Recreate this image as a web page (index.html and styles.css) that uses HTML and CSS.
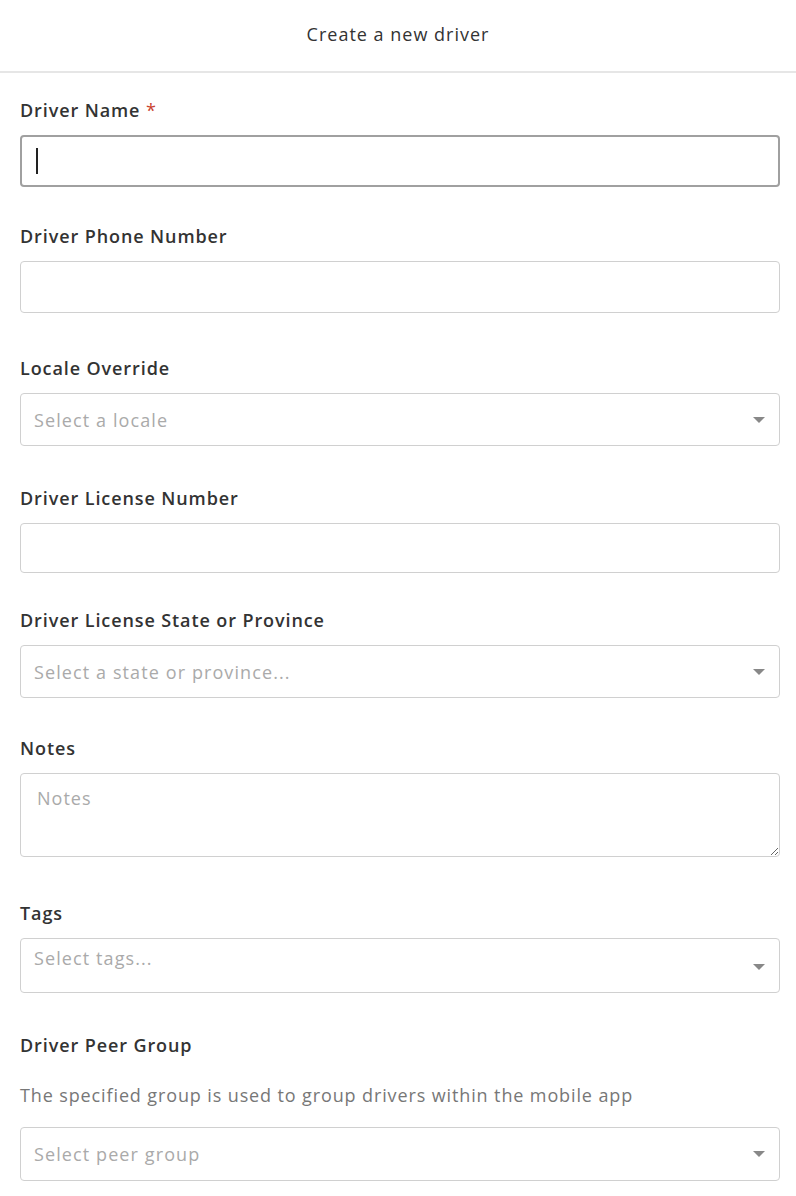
FILE: index.html
```html
<!DOCTYPE html>
<html lang="en">
<head>
<meta charset="utf-8">
<title>Create a new driver</title>
<link rel="stylesheet" href="styles.css">
</head>
<body>
<div class="modal">
  <header class="modal-header">Create a new driver</header>
  <form class="modal-body">
    <div class="field mb-37">
      <label class="label">Driver Name <span class="req">*</span></label>
      <div class="input-wrap">
        <input class="input input-focused" type="text">
        <span class="caret"></span>
      </div>
    </div>
    <div class="field mb-43">
      <label class="label">Driver Phone Number</label>
      <input class="input" type="text">
    </div>
    <div class="field">
      <label class="label">Locale Override</label>
      <div class="select select-sm"><span class="placeholder">Select a locale</span><svg class="arrow" width="12" height="6" viewBox="0 0 12 6"><path d="M0 0h12L6 6z" fill="#888"/></svg></div>
    </div>
    <div class="field mb-35">
      <label class="label">Driver License Number</label>
      <input class="input input-short" type="text">
    </div>
    <div class="field mb-38">
      <label class="label">Driver License State or Province</label>
      <div class="select select-sm"><span class="placeholder">Select a state or province...</span><svg class="arrow" width="12" height="6" viewBox="0 0 12 6"><path d="M0 0h12L6 6z" fill="#888"/></svg></div>
    </div>
    <div class="field mb-44">
      <label class="label">Notes</label>
      <textarea class="textarea" placeholder="Notes"></textarea>
    </div>
    <div class="field">
      <label class="label">Tags</label>
      <div class="select select-tags"><span class="placeholder">Select tags...</span><svg class="arrow" width="12" height="6" viewBox="0 0 12 6"><path d="M0 0h12L6 6z" fill="#888"/></svg></div>
    </div>
    <div class="field">
      <label class="label">Driver Peer Group</label>
      <p class="help">The specified group is used to group drivers within the mobile app</p>
      <div class="select"><span class="placeholder">Select peer group</span><svg class="arrow" width="12" height="6" viewBox="0 0 12 6"><path d="M0 0h12L6 6z" fill="#888"/></svg></div>
    </div>
  </form>
</div>
</body>
</html>
```
FILE: styles.css
```css
* { box-sizing: border-box; }
html, body { margin: 0; padding: 0; background: #fff; }
body {
  font-family: "Open Sans", "Noto Sans", sans-serif;
  color: #333;
  width: 796px;
  height: 1196px;
  overflow: hidden;
}
.modal-header {
  height: 73px;
  border-bottom: 2px solid #e6e6e6;
  display: flex;
  align-items: center;
  justify-content: center;
  font-size: 18px;
  letter-spacing: 1px;
  color: #333;
  padding-bottom: 3px;
}
.modal-body {
  padding: 25px 16px 0 20px;
  display: flex;
  flex-direction: column;
}
.field { display: flex; flex-direction: column; margin-bottom: 40px; }
.mb-35 { margin-bottom: 35px; }
.mb-37 { margin-bottom: 37px; }
.mb-38 { margin-bottom: 38px; }
.mb-43 { margin-bottom: 43px; }
.mb-44 { margin-bottom: 44px; }
.label {
  font-size: 18px;
  font-weight: 600;
  line-height: 24px;
  margin-bottom: 13px;
  letter-spacing: 0.9px;
  color: #333;
}
.req { color: #c9432f; font-weight: 400; }
.input-wrap { position: relative; }
.input {
  width: 100%;
  height: 52px;
  border: 1px solid #d0d0d0;
  border-radius: 4px;
  font: inherit;
  font-size: 18px;
  padding: 0 13px;
  outline: none;
  background: #fff;
}
.input-short { height: 50px; }
.input-focused { border: 2px solid #a0a0a0; }
.caret {
  position: absolute;
  left: 16px;
  top: 13px;
  width: 2px;
  height: 26px;
  background: #222;
}
.select {
  height: 54px;
  border: 1px solid #d0d0d0;
  border-radius: 4px;
  display: flex;
  align-items: center;
  justify-content: space-between;
  padding: 0 14px 0 13px;
}
.select-sm { height: 53px; }
.select-tags { height: 55px; align-items: flex-start; padding-top: 7px; }
.select-tags .arrow { margin-top: 18px; }
.placeholder {
  font-size: 18px;
  color: #aaa;
  letter-spacing: 1.1px;
}
.textarea {
  display: block;
  width: 100%;
  height: 84px;
  border: 1px solid #d0d0d0;
  border-radius: 4px;
  font: inherit;
  font-size: 18px;
  letter-spacing: 1px;
  padding: 12px 16px;
  resize: vertical;
  outline: none;
  color: #333;
}
.textarea::placeholder { color: #aaa; }
.help {
  margin: 0 0 20px;
  font-size: 18px;
  line-height: 24px;
  color: #777;
  letter-spacing: 0.88px;
}
.label + .help { margin-top: 13px; }
```
